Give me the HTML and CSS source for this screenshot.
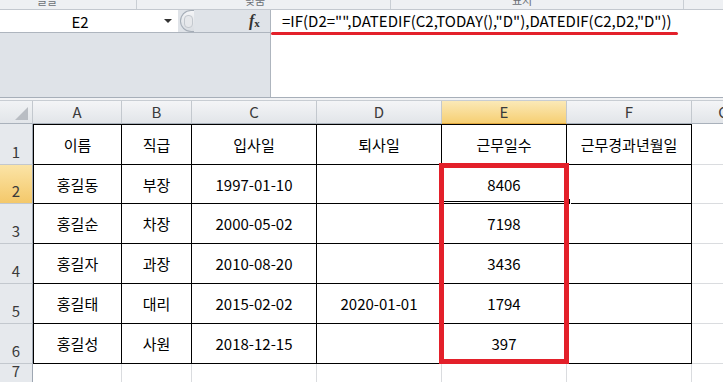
FILE: index.html
```html
<!DOCTYPE html>
<html>
    <head>
        <meta charset="utf-8">
        <title>근무일수</title>
        <link rel="stylesheet" href="styles.css">
    </head>
    <body>
        <div class="ribbon">
            <div class="group g1"><span>글꼴</span></div>
            <div class="group g2"><span>맞춤</span></div>
            <div class="group g3"><span>표시</span></div>
            <div class="group g4"></div>
        </div>
        <div class="fbar">
            <div class="fbar_left">
                <div class="name_row">
                    <div class="namebox"><span class="name_text">E2</span><span class="arrow"></span></div>
                    <div class="grip"><span></span></div>
                    <div class="fx"><i>f</i><sub>x</sub></div>
                </div>
            </div>
            <div class="formula">=IF(D2="",DATEDIF(C2,TODAY(),"D"),DATEDIF(C2,D2,"D"))</div>
        </div>
        <div class="split"></div>
        <div class="sheet">
            <!-- 열 머리글 -->
            <div class="corner"><span></span></div>
            <div class="colhead">A</div>
            <div class="colhead">B</div>
            <div class="colhead">C</div>
            <div class="colhead">D</div>
            <div class="colhead on">E</div>
            <div class="colhead">F</div>
            <div class="colhead">G</div>

            <div class="rowhead">1</div>
            <div class="cell top first">이름</div>
            <div class="cell top">직급</div>
            <div class="cell top">입사일</div>
            <div class="cell top">퇴사일</div>
            <div class="cell top">근무일수</div>
            <div class="cell top">근무경과년월일</div>
            <div class="empty"></div>

            <div class="rowhead on">2</div>
            <div class="cell first">홍길동</div>
            <div class="cell">부장</div>
            <div class="cell">1997-01-10</div>
            <div class="cell"></div>
            <div class="cell">8406</div>
            <div class="cell"></div>
            <div class="empty"></div>

            <div class="rowhead">3</div>
            <div class="cell first">홍길순</div>
            <div class="cell">차장</div>
            <div class="cell">2000-05-02</div>
            <div class="cell"></div>
            <div class="cell">7198</div>
            <div class="cell"></div>
            <div class="empty"></div>

            <div class="rowhead">4</div>
            <div class="cell first">홍길자</div>
            <div class="cell">과장</div>
            <div class="cell">2010-08-20</div>
            <div class="cell"></div>
            <div class="cell">3436</div>
            <div class="cell"></div>
            <div class="empty"></div>

            <div class="rowhead">5</div>
            <div class="cell first">홍길태</div>
            <div class="cell">대리</div>
            <div class="cell">2015-02-02</div>
            <div class="cell">2020-01-01</div>
            <div class="cell">1794</div>
            <div class="cell"></div>
            <div class="empty"></div>

            <div class="rowhead">6</div>
            <div class="cell first">홍길성</div>
            <div class="cell">사원</div>
            <div class="cell">2018-12-15</div>
            <div class="cell"></div>
            <div class="cell">397</div>
            <div class="cell"></div>
            <div class="empty"></div>

            <div class="rowhead">7</div>
            <div class="empty"></div>
            <div class="empty"></div>
            <div class="empty"></div>
            <div class="empty"></div>
            <div class="empty"></div>
            <div class="empty"></div>
            <div class="empty"></div>

            <div class="active"><span class="handle"></span></div>
            <div class="redbox"></div>
        </div>
    </body>
</html>
```

FILE: styles.css
```css
body {
    margin: 0;
    width: 723px;
    height: 382px;
    overflow: hidden;
    background: #ffffff;
    font-family: "Noto Sans CJK KR", "Noto Sans", sans-serif;
}

/* 리본 아래쪽 일부 */
.ribbon {
    display: flex;
    height: 9px;
    overflow: hidden;
    background: #eef0f3;
    border-bottom: 1px solid #c3c8cf;
}
.group {
    border-right: 1px solid #c9ced4;
    overflow: hidden;
}
.group span {
    display: block;
    font-size: 11px;
    line-height: 11px;
    margin-top: -5px;
    color: #6b6f75;
}
.g1 { width: 137px; padding-left: 37px; box-sizing: border-box; }
.g2 { width: 254px; padding-left: 108px; box-sizing: border-box; }
.g3 { width: 293px; padding-left: 121px; box-sizing: border-box; }
.g4 { flex: 1; border-right: none; }

/* 수식 입력줄 */
.fbar {
    display: flex;
    height: 87px;
    background: #dfe3e8;
}
.fbar_left {
    width: 270px;
}
.name_row {
    display: flex;
    align-items: center;
    height: 22px;
    border-bottom: 1px solid #aeb5be;
}
.namebox {
    width: 178px;
    height: 22px;
    background: #ffffff;
    display: flex;
    align-items: center;
}
.name_text {
    width: 160px;
    text-align: center;
    font-size: 15px;
    color: #000;
}
.arrow {
    width: 0;
    height: 0;
    border-left: 4px solid transparent;
    border-right: 4px solid transparent;
    border-top: 4px solid #333;
    margin-left: 4px;
}
.grip {
    width: 13px;
    height: 20px;
    margin-left: 2px;
    border: 1px solid #a5adb7;
    border-right: none;
    border-radius: 11px 0 0 11px;
    background: linear-gradient(#f4f5f7, #d9dde2);
    display: flex;
    align-items: center;
    justify-content: flex-end;
}
.grip span {
    width: 7px;
    height: 11px;
    border-radius: 4px;
    background: #e6e8eb;
    border: 1px solid #c3c8ce;
    margin-right: 1px;
}
.fx {
    margin-left: 55px;
    font-family: "Liberation Serif", serif;
    font-weight: bold;
    font-size: 16px;
    color: #333;
}
.fx sub {
    font-size: 11px;
    vertical-align: -1px;
}
.formula {
    flex: 1;
    position: relative;
    background: #ffffff;
    border-left: 1px solid #aeb5be;
    padding-left: 11px;
    font-size: 15px;
    line-height: 22px;
    color: #000;
    white-space: nowrap;
}
.formula::after {
    content: "";
    position: absolute;
    left: 0;
    top: 22px;
    width: 407px;
    height: 3px;
    border-radius: 2px;
    background: #e3202a;
}
.split {
    height: 2px;
    border-top: 1px solid #a7afb9;
    border-bottom: 1px solid #c8cdd3;
    background: #f2f3f5;
}

/* 시트 */
.sheet {
    position: relative;
    display: grid;
    grid-template-columns: 33px 89px 70px 125px 125px 125px 125px 64px;
    grid-template-rows: 23px 41px 39px 40px 40px 40px 40px 20px;
}
.corner {
    background: linear-gradient(#f1f3f5, #e2e5e9);
    border-right: 1px solid #c3c8ce;
    border-bottom: 1px solid #a9b1bb;
    position: relative;
}
.corner span {
    position: absolute;
    right: 4px;
    bottom: 3px;
    width: 0;
    height: 0;
    border-left: 13px solid transparent;
    border-bottom: 13px solid #b9bdc3;
}
.colhead {
    background: linear-gradient(#f4f5f7, #e2e5e9);
    border-right: 1px solid #c3c8ce;
    border-bottom: 1px solid #a9b1bb;
    text-align: center;
    font-size: 15px;
    line-height: 22px;
    color: #3a3a3a;
}
.colhead.on {
    background: linear-gradient(#fbe9b7, #f6cf73);
    border-bottom-color: #e1a83e;
}
.rowhead {
    background: #e6e9ed;
    border-right: 1px solid #9ea7b2;
    border-bottom: 1px solid #c3c8ce;
    display: flex;
    align-items: flex-end;
    justify-content: center;
    padding-bottom: 2px;
    font-size: 15px;
    color: #3a3a3a;
}
.rowhead.on {
    background: linear-gradient(#fbe4a6, #f4c86a);
}
.cell, .empty {
    border-right: 1px solid #000;
    border-bottom: 1px solid #000;
    display: flex;
    align-items: center;
    justify-content: center;
    font-size: 15px;
    color: #000;
}
.cell.top {
    border-top: 1px solid #000;
}
.cell.first {
    border-left: 1px solid #000;
}
.empty {
    border-right-color: #dadcdf;
    border-bottom-color: #dadcdf;
}
.rowhead, .cell, .empty, .colhead, .corner {
    box-sizing: border-box;
}

/* 선택 영역 표시 */
.active {
    position: absolute;
    left: 441px;
    top: 62px;
    width: 127px;
    height: 39px;
    box-sizing: border-box;
    border: 2px solid #000;
    border-bottom-width: 1px;
}
.handle {
    position: absolute;
    right: -5px;
    bottom: -4px;
    width: 5px;
    height: 5px;
    background: #000;
    border: 1px solid #fff;
}
.redbox {
    position: absolute;
    left: 439px;
    top: 62px;
    width: 130px;
    height: 201px;
    box-sizing: border-box;
    border: 5px solid #e3202a;
}
```
